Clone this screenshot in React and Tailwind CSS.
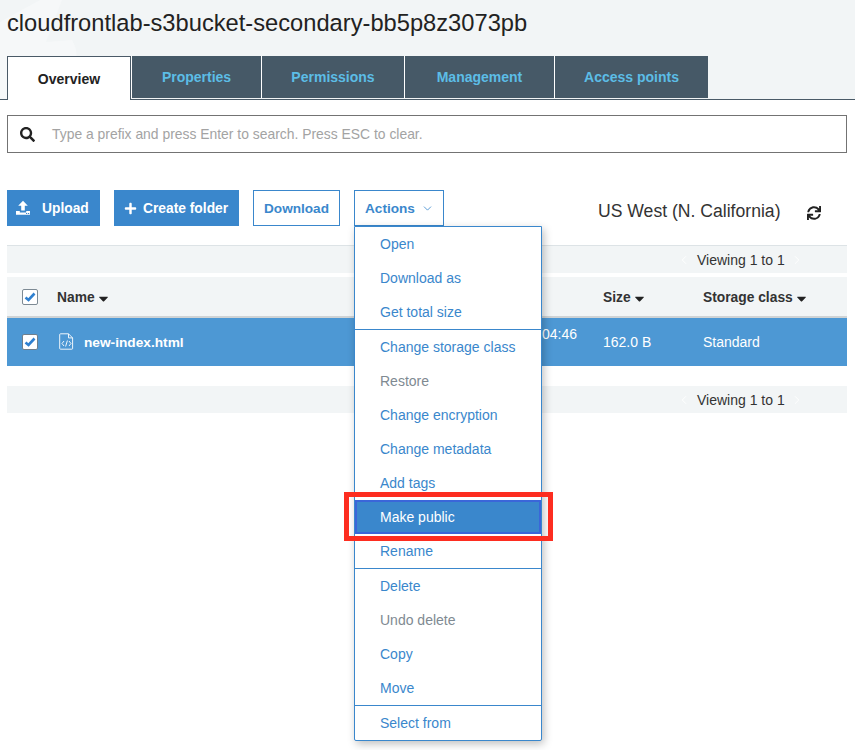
import React from 'react';
import { FaSearch, FaPlus, FaSync, FaCaretDown } from 'react-icons/fa';
import { ChevronDown, ChevronLeft, ChevronRight } from 'lucide-react';

const tabs = [
  { label: 'Properties', width: 'w-[130px]' },
  { label: 'Permissions', width: 'w-[143px]' },
  { label: 'Management', width: 'w-[150px]' },
  { label: 'Access points', width: 'w-[154px]' },
];

const menuGroups = [
  [{ label: 'Open' }, { label: 'Download as' }, { label: 'Get total size' }],
  [
    { label: 'Change storage class' },
    { label: 'Restore', disabled: true },
    { label: 'Change encryption' },
    { label: 'Change metadata' },
    { label: 'Add tags' },
    { label: 'Make public', active: true },
    { label: 'Rename' },
  ],
  [
    { label: 'Delete' },
    { label: 'Undo delete', disabled: true },
    { label: 'Copy' },
    { label: 'Move' },
  ],
  [{ label: 'Select from' }],
];

const UploadIcon = () => (
  <svg width="16" height="16" viewBox="0 0 16 16" fill="#fff">
    <path d="M8 0.8 L12.8 5.8 H9.8 V10.5 H6.2 V5.8 H3.2 Z" />
    <path d="M1 11 H4.8 V12.4 H11.2 V11 H15 V14.8 H1 Z" />
    <rect x="11" y="13" width="1.2" height="1" fill="#3a87cc" />
    <rect x="13" y="13" width="1.2" height="1" fill="#3a87cc" />
  </svg>
);

const FileCodeIcon = () => (
  <svg width="15" height="17" viewBox="0 0 15 17" fill="none" stroke="#fff" strokeWidth="0.9">
    <path d="M1.5 0.8 H9.5 L13.6 4.9 V15.4 a0.8 0.8 0 0 1 -0.8 0.8 H1.5 a0.8 0.8 0 0 1 -0.8 -0.8 V1.6 a0.8 0.8 0 0 1 0.8 -0.8 Z" />
    <path d="M9.5 0.8 V4.9 H13.6" />
    <path d="M5 8 L3 10.5 L5 13 M10 8 L12 10.5 L10 13 M8.4 7.5 L6.6 13.5" />
  </svg>
);

const Check = ({ outline }) => (
  <span
    className={`flex h-4 w-4 items-center justify-center rounded-[2px] border bg-white ${
      outline ? 'border-[#7d8a94]' : 'border-[#6f7f8c]'
    }`}
  >
    <svg width="12" height="10" viewBox="0 0 12 10" fill="none" stroke="#2f80d0" strokeWidth="2.6">
      <path d="M1.5 5.5 L4.5 8 L10.5 1.5" />
    </svg>
  </span>
);

const PagerBar = ({ className }) => (
  <div className={`flex items-center bg-[#f2f5f6] pl-[670px] pt-[1px] text-[14px] text-[#333] ${className}`}>
    <ChevronLeft size={14} strokeWidth={1.5} className="text-white" />
    <span className="ml-[6px] w-[86px] whitespace-nowrap">Viewing 1 to 1</span>
    <ChevronRight size={14} strokeWidth={1.5} className="ml-[7px] text-white" />
  </div>
);

const SortHeader = ({ label, className }) => (
  <div className={`flex items-center gap-[1px] pt-[3px] text-[13.8px] font-bold text-[#333] ${className}`}>
    {label}
    <FaCaretDown size={15} className="text-[#222]" />
  </div>
);

const ActionsMenu = () => (
  <div className="absolute left-0 top-full z-10 w-[188px] rounded-b-[2px] border border-[#3a87cc] bg-white shadow-[2px_3px_8px_rgba(0,0,0,0.25)]">
    {menuGroups.map((group, i) => (
      <div key={i} className={i > 0 ? 'border-t border-[#3a87cc]' : ''}>
        {group.map((item) => (
          <div
            key={item.label}
            className={`relative flex h-[34px] items-center text-[14px] ${
              item.active
                ? 'border-2 border-[#3a66d9] bg-[#3a87cc] pl-[23px] text-white'
                : item.disabled
                ? 'pl-[25px] text-[#808a92]'
                : 'pl-[25px] text-[#3a87cc]'
            }`}
          >
            {item.label}
            {item.active && (
              <span className="absolute -bottom-[9px] -left-[13px] -right-[14px] -top-[10px] border-[5px] border-[#fd2d20]" />
            )}
          </div>
        ))}
      </div>
    ))}
  </div>
);

export default function App() {
  return (
    <div className="min-h-[750px] overflow-hidden bg-white font-['Liberation_Sans',Arial,sans-serif]">
      <div className="relative flex h-[100px] flex-col border-b border-[#4a5a67] bg-[#f2f5f6] px-[7px]">
        {/* faint watermark behind the title */}
        <svg className="absolute left-0 top-0" width="110" height="99" viewBox="0 0 110 99" fill="#f6f8f9">
          <path d="M0 22 L40 0 L62 0 L46 42 L72 40 Q78 50 76 60 L50 56 L30 99 L0 99 Z" />
        </svg>
        <h1 className="relative mt-[8px] h-[48px] shrink-0 whitespace-nowrap text-[23.7px] leading-[30px] font-normal text-[#222]">
          cloudfrontlab-s3bucket-secondary-bb5p8z3073pb
        </h1>
        <div className="relative flex h-[43px] shrink-0 items-start">
          <div className="flex h-[44px] w-[124px] items-center justify-center border border-b-0 border-[#4a5a67] bg-white pt-[1px] text-[14px] font-bold text-[#222]">
            Overview
          </div>
          {tabs.map((tab) => (
            <div
              key={tab.label}
              className={`flex h-[42px] items-center justify-center border-l border-white bg-[#465967] text-[14px] font-bold text-[#5cbde6] ${tab.width}`}
            >
              {tab.label}
            </div>
          ))}
        </div>
      </div>

      <div className="pl-[7px] pr-[8px]">
        <div className="mt-[15px] flex h-[38px] items-center border border-[#737373] pl-[12px] text-[13.9px] text-[#a3a3a3]">
          <FaSearch size={15} className="text-[#222]" />
          <span className="ml-[17px]">Type a prefix and press Enter to search. Press ESC to clear.</span>
        </div>

        <div className="mt-[37px] flex h-[36px] items-center">
          <button className="flex h-[36px] w-[93px] items-center bg-[#3a87cc] pl-[8px] text-[13.8px] font-bold text-white">
            <UploadIcon />
            <span className="ml-[11px] pt-[3px]">Upload</span>
          </button>
          <button className="ml-[14px] flex h-[36px] w-[125px] items-center bg-[#3a87cc] pl-[10px] text-[13.8px] font-bold text-white">
            <FaPlus size={13} />
            <span className="ml-[6px] pt-[3px]">Create folder</span>
          </button>
          <button className="ml-[14px] h-[36px] w-[87px] border border-[#3a87cc] pt-[2px] text-[13.6px] font-bold text-[#3a87cc]">
            Download
          </button>
          <div className="relative ml-[14px]">
            <button className="flex h-[36px] w-[90px] items-center border border-[#3a87cc] pl-[10px] text-[13.6px] font-bold text-[#3a87cc]">
              <span className="pt-[3px]">Actions</span>
              <ChevronDown size={13} strokeWidth={1.5} className="ml-[6px]" />
            </button>
            <ActionsMenu />
          </div>
          <span className="ml-[154px] mt-[6px] text-[17.6px] text-[#333]">US West (N. California)</span>
          <FaSync size={14} className="ml-[26px] mt-[9px] text-[#222]" />
        </div>

        <PagerBar className="mt-[19px] h-[28px] border-t border-[#dde3e6]" />

        <div className="mt-[4px] flex h-[41px] items-center border-b-2 border-[#cfd3d5] bg-[#f2f5f6]">
          <div className="w-[50px] pl-[15px]"><Check outline /></div>
          <SortHeader label="Name" className="w-[546px]" />
          <SortHeader label="Size" className="w-[100px]" />
          <SortHeader label="Storage class" />
        </div>

        <div className="flex h-[48px] items-center bg-[#4d98d4] text-[14px] text-white">
          <div className="w-[50px] pl-[15px]"><Check /></div>
          <div className="flex w-[485px] items-center pl-[2px] text-[13.7px] font-bold">
            <FileCodeIcon />
            <span className="ml-[10px] pt-[2px]">new-index.html</span>
          </div>
          <div className="mb-[15px] w-[61px]">04:46</div>
          <div className="w-[100px]">162.0 B</div>
          <div>Standard</div>
        </div>

        <PagerBar className="mt-[20px] h-[27px]" />
      </div>
    </div>
  );
}
